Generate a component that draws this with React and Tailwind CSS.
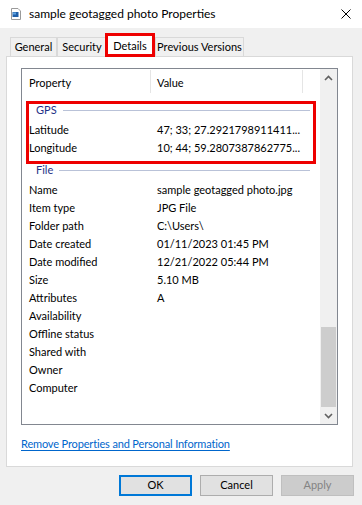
import React from "react";

const gps = [
  ["Latitude", "47; 33; 27.2921798911411..."],
  ["Longitude", "10; 44; 59.2807387862775..."],
];

const file = [
  ["Name", "sample geotagged photo.jpg"],
  ["Item type", "JPG File"],
  ["Folder path", "C:\\Users\\"],
  ["Date created", "01/11/2023 01:45 PM"],
  ["Date modified", "12/21/2022 05:44 PM"],
  ["Size", "5.10 MB"],
  ["Attributes", "A"],
  ["Availability", ""],
  ["Offline status", ""],
  ["Shared with", ""],
  ["Owner", ""],
  ["Computer", ""],
];

const FileIcon = () => (
  <svg width="10" height="12" viewBox="0 0 10 12">
    <path d="M0.5 0.5 H7 L9.5 3 V11.5 H0.5 Z" fill="#fff" stroke="#9a9a9a" />
    <rect x="1.5" y="4" width="6" height="5" fill="#1f5fa8" />
    <rect x="2" y="4.5" width="3" height="2" fill="#5ea3e0" />
  </svg>
);

const Row = ({ label, value }) => (
  <div className="flex h-[18px] items-center">
    <span className="w-[135px] shrink-0 pl-[7px]">{label}</span>
    <span className="whitespace-nowrap">{value}</span>
  </div>
);

const GroupHeader = ({ title }) => (
  <div className="flex h-[18px] items-center pl-[14px] pr-[10px]">
    <span className="text-[#1e3287]">{title}</span>
    <div className="ml-[6px] h-px flex-1 bg-[#b9c2d8]" />
  </div>
);

const Tab = ({ children, active, w }) =>
  active ? (
    <div className={`relative z-10 -ml-[2px] -mb-px flex h-[22px] items-center justify-center self-end border border-b-0 border-[#d9d9d9] bg-white ${w}`}>
      {children}
      <div className="absolute -left-[1px] -right-[1px] -top-[3px] bottom-0 border-[3px] border-[#ee0000]" />
    </div>
  ) : (
    <div className={`flex h-[19px] items-center justify-center self-end border border-b-0 border-[#d9d9d9] bg-[#f0f0f0] ${w}`}>
      {children}
    </div>
  );

export default function App() {
  return (
    <div
      className="flex h-[505px] w-[362px] flex-col overflow-hidden bg-[#f0f0f0] text-[11px] text-black"
      style={{ fontFamily: "Lato, 'Liberation Sans', sans-serif" }}
    >
      {/* Title bar */}
      <div className="flex h-[28px] shrink-0 items-center bg-white pl-[11px] pr-[11px]">
        <FileIcon />
        <span className="ml-[8px] text-[12px]">sample geotagged photo Properties</span>
        <svg className="ml-auto" width="10" height="10" viewBox="0 0 10 10">
          <path d="M0.5 0.5 L9.5 9.5 M9.5 0.5 L0.5 9.5" stroke="#000" strokeWidth="1" />
        </svg>
      </div>

      {/* Tabs */}
      <div className="flex h-[28px] shrink-0 items-end pl-[10px]">
        <Tab w="w-[47px]">General</Tab>
        <Tab w="w-[50px]">Security</Tab>
        <Tab active w="w-[50px]">Details</Tab>
        <Tab w="w-[89px]">Previous Versions</Tab>
      </div>

      {/* Panel */}
      <div className="ml-[6px] flex h-[411px] w-[347px] flex-col border border-[#d9d9d9] bg-white px-[14px] pt-[11px]">
        <div className="flex h-[357px] border border-[#828790]">
          <div className="flex flex-1 flex-col">
            <div className="flex h-[25px] items-center">
              <span className="flex h-[23px] w-[129px] items-center border-r border-[#e5e5e5] pl-[7px] pt-[4px]">Property</span>
              <span className="flex h-[23px] w-[152px] items-center border-r border-[#e5e5e5] pl-[6px] pt-[4px]">Value</span>
            </div>
            <div className="relative mt-[7px]">
              <GroupHeader title="GPS" />
              <div className="mt-[2px]">
                {gps.map(([l, v]) => (
                  <Row key={l} label={l} value={v} />
                ))}
              </div>
              <div className="absolute top-0 left-[4px] right-[4px] h-[63px] border-[3px] border-[#ee0000]" />
            </div>
            <div className="mt-[4px]">
              <GroupHeader title="File" />
              <div className="mt-[2px]">
                {file.map(([l, v]) => (
                  <Row key={l} label={l} value={v} />
                ))}
              </div>
            </div>
          </div>
          {/* Scrollbar */}
          <div className="flex w-[17px] shrink-0 flex-col bg-[#f0f0f0]">
            <div className="flex h-[17px] items-center justify-center">
              <svg width="9" height="6" viewBox="0 0 9 6">
                <path d="M1 5 L4.5 1.5 L8 5" fill="none" stroke="#606060" strokeWidth="1.6" />
              </svg>
            </div>
            <div className="flex-1" />
            <div className="mx-px h-[80px] bg-[#cdcdcd]" />
            <div className="flex h-[17px] items-center justify-center">
              <svg width="9" height="6" viewBox="0 0 9 6">
                <path d="M1 1 L4.5 4.5 L8 1" fill="none" stroke="#606060" strokeWidth="1.6" />
              </svg>
            </div>
          </div>
        </div>
        <div className="mt-[11px]">
          <span className="tracking-[-0.15px] text-[#0066cc] underline underline-offset-2">
            Remove Properties and Personal Information
          </span>
        </div>
      </div>

      {/* Buttons */}
      <div className="mt-[8px] flex justify-end gap-[8px] pr-[8px]">
        <button className="h-[21px] w-[73px] border-2 border-[#0078d7] bg-[#e1e1e1]">OK</button>
        <button className="h-[21px] w-[73px] border border-[#adadad] bg-[#e1e1e1]">Cancel</button>
        <button className="h-[21px] w-[73px] border border-[#bfbfbf] bg-[#cccccc] text-[#838383]">
          Apply
        </button>
      </div>
    </div>
  );
}
